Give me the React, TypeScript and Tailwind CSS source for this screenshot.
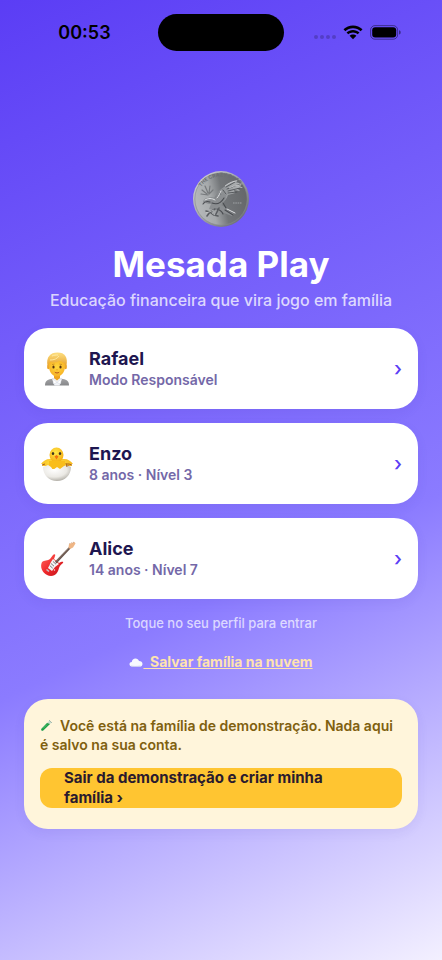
import React from "react";

function WifiIcon() {
  return (
    <svg width="20" height="15" viewBox="0 0 20 15" aria-hidden="true">
      <path d="M10 0.6C6.4 0.6 3 2 0.5 4.3L2.3 6.2C4.4 4.3 7.1 3.2 10 3.2s5.6 1.1 7.7 3L19.5 4.3C17 2 13.6 .6 10 .6Z" />
      <path d="M10 5C7.6 5 5.3 5.9 3.5 7.5L5.3 9.3C6.6 8.2 8.2 7.500 10 7.5s3.4 .7 4.7 1.800L16.5 7.5C14.7 5.9 12.4 5 10 5Z" />
      <path d="M10 9.4C8.7 9.4 7.5 9.9 6.6 10.7L10 14.2l3.4-3.5C12.5 9.9 11.3 9.4 10 9.4Z" />
    </svg>
  );
}

function BatteryIcon() {
  return (
    <svg width="32" height="15" viewBox="0 0 32 15" aria-hidden="true">
      <rect x="0.6" y="0.6" width="27" height="13.6" rx="4.3" fill="none" stroke="#000" strokeOpacity=".42" />
      <rect x="2.2" y="2.2" width="24" height="10.4" rx="3" />
      <path d="M29 5.2c1.2 .4 1.7 1.2 1.7 2.200s-.5 1.8-1.7 2.2Z" fillOpacity=".45" />
    </svg>
  );
}

function Coin() {
  return (
    <svg width="58" height="58" viewBox="0 0 58 58" role="img" aria-label="Moeda">
      <defs>
        <linearGradient id="rim" x1="0" y1="0" x2="1" y2="1">
          <stop offset="0" stopColor="#d5d8da" />
          <stop offset=".5" stopColor="#a2a5a8" />
          <stop offset="1" stopColor="#5b5e62" />
        </linearGradient>
        <linearGradient id="face" x1=".05" y1=".6" x2=".95" y2=".4">
          <stop offset="0" stopColor="#b4b7b9" />
          <stop offset=".3" stopColor="#a6a9ab" />
          <stop offset=".55" stopColor="#737679" />
          <stop offset="1" stopColor="#66686b" />
        </linearGradient>
        <linearGradient id="wing" x1="0" y1="0" x2="1" y2="0">
          <stop offset="0" stopColor="#7c7f82" />
          <stop offset="1" stopColor="#b7babc" />
        </linearGradient>
        <path id="legend" d="M9 17C17 5 37 2 48 15" />
      </defs>
      <circle cx="29" cy="29" r="28" fill="url(#rim)" />
      <circle cx="29" cy="29" r="26.2" fill="url(#face)" stroke="#85888b" strokeWidth=".6" />
      <text fontSize="5" fontWeight="700" fill="#6b6e71" fontFamily="Inter, sans-serif">
        <textPath href="#legend">THE CRAZY ONES</textPath>
      </text>
      <path
        d="M10 20l5 4M13 16l3 7M18 16l-1 7M21 20l-4 4M9 24l7 1"
        stroke="#76797c"
        strokeWidth="1.2"
        strokeLinecap="round"
      />
      <path
        d="M24 25c2-4 5-6 8-8 4-4 8-6 14-7l-3 2 8 2-5 1 5 3-6 0 3 3-6-1 1 3-7 2c-1 4-4 7-8 9l-8-3Z"
        fill="url(#wing)"
      />
      <path
        d="M34 17l9-5M35 19l13-5M36 21l12-3M36 23l9-1M31 20l3 4M28 23l3 4"
        stroke="#505357"
        strokeWidth=".9"
        strokeLinecap="round"
      />
      <path d="M33 16c4-3 8-5 12-5M37 18c4-2 8-3 12-3" fill="none" stroke="#dcdee0" strokeWidth=".7" />
      <path
        d="M11 33c0-3 2-5 5-5 3-2 6-1 9 1 3-2 4-5 6-7l3 3c0 4-2 8-5 10l4 2 3 4 6 3-2 2-8-3-5-4-5 1-5-1 2-5c-2 0-4 0-6-2Z"
        fill="#8b8e91"
      />
      <path
        d="M11 34c2-3 4-3 7-2M20 33c5 2 9 0 12-5M25 39c3 1 5 2 6 5M33 40l8 5M31 33l3 5"
        fill="none"
        stroke="#484b4f"
        strokeWidth="1.1"
        strokeLinecap="round"
      />
      <path
        d="M13 30c3-2 7-2 10 0M25 28c2-2 3-5 4-7M35 39l8 4"
        fill="none"
        stroke="#e1e3e5"
        strokeWidth="1"
        strokeLinecap="round"
      />
      <path
        d="M23 39l-5 3-4-1M18 42l-3 4M18 42l4 3 4 1M27 38l-3 6"
        fill="none"
        stroke="#5a5d61"
        strokeWidth="1.6"
        strokeLinecap="round"
        strokeLinejoin="round"
      />
      <path d="M22 40l-5 2-3 1M20 43l3 2" fill="none" stroke="#d0d2d4" strokeWidth=".7" />
      <path d="M41 33h9" stroke="#8e9194" strokeWidth="1.4" strokeDasharray="1.6 .7" />
    </svg>
  );
}

function PersonIcon() {
  return (
    <svg width="34" height="36" viewBox="0 0 34 36" aria-hidden="true">
      <defs>
        <radialGradient id="skin" cx=".5" cy=".4" r=".6">
          <stop offset="0" stopColor="#ffd83f" />
          <stop offset="1" stopColor="#f7b024" />
        </radialGradient>
        <linearGradient id="hair" x1="0" y1="0" x2="0" y2="1">
          <stop offset="0" stopColor="#fcdc7d" />
          <stop offset="1" stopColor="#e6a02c" />
        </linearGradient>
        <linearGradient id="jacket" x1="0" y1="0" x2="0" y2="1">
          <stop offset="0" stopColor="#a6a6a8" />
          <stop offset="1" stopColor="#86878a" />
        </linearGradient>
      </defs>
      <path d="M5 34.500c0-4 2-6 6-6.500l6-1 6 1c4 .5 6 2.500 6 6.500Z" fill="url(#jacket)" />
      <path d="M12 27.500h10l-2.500 7h-5Z" fill="#f1f3f8" />
      <path d="M14 22h6v5l-3 2.500-3-2.500Z" fill="#eea31e" />
      <path d="M12.500 27.500l4.500 4-3.500 1.500ZM21.500 27.500l-4.500 4 3.500 1.500Z" fill="#fff" stroke="#c5cad3" strokeWidth=".4" />
      <ellipse cx="8.400" cy="16" rx="1.300" ry="2.200" fill="#eda523" />
      <ellipse cx="25.600" cy="16" rx="1.300" ry="2.200" fill="#eda523" />
      <path d="M7.500 15C6 6 10 1.500 17.500 1.500S28 6 26.500 15l-1 2h-17Z" fill="url(#hair)" />
      <path d="M9 12c0-1 2-2 8-2s8 1 8 2c1 8-3 13.500-8 13.500S8 20 9 12Z" fill="url(#skin)" />
      <path d="M8.500 15c0-2 .5-3 1-4 4 1 8 .5 11-2 1 2 3 3 4.500 3.500v2.500l1-1c1-7-2-11-8.500-11.500C10 2 6.500 7 8 14Z" fill="url(#hair)" />
      <path d="M10 9c4 0 7-1 9-4M12 5c2-1 4-1 6-1" fill="none" stroke="#fff0b0" strokeWidth=".8" />
      <ellipse cx="13.500" cy="16" rx="1.100" ry="1.500" fill="#54310f" />
      <ellipse cx="20.500" cy="16" rx="1.100" ry="1.500" fill="#54310f" />
      <path d="M12 13.500l2.500-.4M19.500 13.100l2.500.4" stroke="#bd7d1b" strokeWidth=".7" />
      <path d="M16.300 18.800h1.400" stroke="#dc9218" strokeWidth=".8" />
      <path d="M14.800 21.200c1.300 1 3.100 1 4.400 0" fill="none" stroke="#b5531d" strokeWidth="1" />
    </svg>
  );
}

function ChickIcon() {
  return (
    <svg width="34" height="36" viewBox="0 0 34 36" aria-hidden="true">
      <defs>
        <radialGradient id="chick" cx=".45" cy=".35" r=".7">
          <stop offset="0" stopColor="#ffe94a" />
          <stop offset="1" stopColor="#f5a90f" />
        </radialGradient>
        <radialGradient id="shell" cx=".4" cy=".3" r=".75">
          <stop offset="0" stopColor="#fff" />
          <stop offset=".6" stopColor="#ebe9e4" />
          <stop offset="1" stopColor="#a9a69e" />
        </radialGradient>
      </defs>
      <path d="M10 13C6 13 3 15 1 18l2 0-1 2 4 0 3 3h16l3-3 4 0-1-2 2 0C31 15 28 13 24 13Z" fill="url(#chick)" />
      <ellipse cx="16.500" cy="9" rx="7" ry="7.500" fill="url(#chick)" />
      <path d="M9 15h16v8H9Z" fill="#f9bd1b" />
      <path d="M3 21l5-2 3 2 2 3 4-3 3 2 4-3 3-1 4 2c0 8-6 14-14 14S3 29 3 21Z" fill="url(#shell)" />
      <ellipse cx="13" cy="7.500" rx="1.200" ry="1.600" fill="#3d3520" />
      <ellipse cx="20" cy="7.500" rx="1.200" ry="1.600" fill="#3d3520" />
      <path d="M14.500 10.500l2-1.500 2 1.500-2 3Z" fill="#f0740f" />
      <path d="M2 19l3-1M32 19l-3-1M26 17l1 4M28 17l0 3" stroke="#a9641a" strokeWidth="1" />
    </svg>
  );
}

function GuitarIcon() {
  return (
    <svg width="36" height="36" viewBox="0 0 36 36" aria-hidden="true">
      <defs>
        <linearGradient id="guitar" x1="0" y1="0" x2="1" y2="1">
          <stop offset="0" stopColor="#ff6a60" />
          <stop offset=".5" stopColor="#f0282b" />
          <stop offset="1" stopColor="#bd1219" />
        </linearGradient>
      </defs>
      <path
        d="M2 21c2-2 6-1 8-3l3-4c1-1 3-1 2 1l-1 3 5 4c2-1 5-2 4 0-1 1-3 2-4 5-1 4-3 8-8 8C4 35-1 27 2 21Z"
        fill="url(#guitar)"
      />
      <path d="M13 18l6 5-4 3-3 4-4-3 3-6Z" fill="#f5f3f3" />
      <path d="M15 20.500L29 6l1.500 1.500-14 15Z" fill="#66534b" />
      <path d="M16 20.500L29.500 6.500" stroke="#bda898" strokeWidth=".4" />
      <path d="M28.500 6.500l.5-3.500 5.500-2 1 1.500-2.500 4-3 1.500Z" fill="#efb685" />
      <path d="M29.500 2.200l.8 .8M31.500 1.400l.8 .8M33.200 1l.8 .8" stroke="#b98a6b" strokeWidth=".7" />
      <path d="M11 22.500l3 2.700M9.700 24.500l3 2.700M13 20.500l3 2.700" stroke="#77787e" strokeWidth="1" />
      <path d="M6.500 28.500l2.500 2" stroke="#c5c5c9" strokeWidth="1.600" />
      <circle cx="14.500" cy="29" r=".7" fill="#eee" />
    </svg>
  );
}

function CloudIcon() {
  return (
    <svg className="inline-block align-[-1px]" width="14" height="11" viewBox="0 0 14 11" aria-hidden="true">
      <path
        d="M3 9.500C1.300 9.500.5 8.500.5 7.300c0-1.300 1-2.200 2.300-2.200C3 2.800 4.500 1.500 6.500 1.500c1.700 0 3 1 3.500 2.500 2 0 3.500 1 3.500 2.900 0 1.600-1.200 2.600-2.800 2.600Z"
        fill="#f7f9ff"
      />
      <path d="M2 9c3 .6 6 .5 9.500 0" fill="none" stroke="#cdd3e8" strokeWidth=".8" />
    </svg>
  );
}

function TubeIcon() {
  return (
    <svg className="inline-block align-[-1px]" width="13" height="13" viewBox="0 0 13 13" aria-hidden="true">
      <path d="M9.500 1.500l2 2-8.200 8c-1.500 1.200-3-.3-1.900-1.900Z" fill="#c6dccb" />
      <path d="M7 4l3 .9-6.800 6.500c-1.300 1-2.600-.4-1.700-1.700Z" fill="#1d9e45" />
      <path d="M9 1l3 3" stroke="#a9bbb0" strokeWidth="1" />
      <path d="M3 9.500l4-4" stroke="#67d283" strokeWidth=".7" />
    </svg>
  );
}

const profiles = [
  { name: "Rafael", detail: "Modo Responsável", icon: <PersonIcon /> },
  { name: "Enzo", detail: "8 anos · Nível 3", icon: <ChickIcon /> },
  { name: "Alice", detail: "14 anos · Nível 7", icon: <GuitarIcon /> },
];

export default function App() {
  return (
    <div className="flex min-h-screen flex-col bg-[linear-gradient(155deg,#5b3df5_0%,#8b7bff_60%,#f3f0ff_100%)] font-['Inter',sans-serif]">
      <header className="grid h-[65px] grid-cols-[1fr_126px_1fr] items-center">
        <time className="pl-[11px] text-center text-[18px] font-semibold text-black">00:53</time>
        <div className="h-[37px] rounded-full bg-black" />
        <div className="flex items-center justify-end gap-[7px] pr-10">
          <div className="flex gap-[2px] pt-2">
            <span className="size-1 rounded-full bg-black/20" />
            <span className="size-1 rounded-full bg-black/20" />
            <span className="size-1 rounded-full bg-black/20" />
            <span className="size-1 rounded-full bg-black/20" />
          </div>
          <WifiIcon />
          <BatteryIcon />
        </div>
      </header>

      <main className="flex flex-1 flex-col items-center px-6 pt-[105px] pb-10">
        <Coin />
        <h1 className="mt-4 text-[35px] leading-10 font-bold text-white">Mesada Play</h1>
        <p className="mt-[6px] text-[16px] leading-5 font-medium text-white/75">
          Educação financeira que vira jogo em família
        </p>

        <div className="mt-[18px] flex w-full flex-col gap-[14px]">
          {profiles.map((profile) => (
            <button
              key={profile.name}
              type="button"
              className="flex h-[81px] w-full items-center rounded-3xl bg-white px-4 pt-px text-left shadow-[0_4px_12px_rgba(60,40,160,0.07)]"
            >
              <span className="flex w-[49px] shrink-0">{profile.icon}</span>
              <span className="flex flex-1 flex-col">
                <span className="text-[18px] leading-[22px] font-bold text-[#1e1650]">{profile.name}</span>
                <span className="text-[14px] leading-5 font-semibold text-[#7468a8]">{profile.detail}</span>
              </span>
              <span className="text-[20px] leading-6 font-medium text-[#5b3df5]">›</span>
            </button>
          ))}
        </div>

        <p className="mt-[15px] text-[13px] leading-[18px] font-medium text-white/70">Toque no seu perfil para entrar</p>
        <a href="#nuvem" className="mt-5 text-[14px] leading-5 font-bold text-[#ffe3ae] underline">
          <CloudIcon />
          {"\u00a0 Salvar família na nuvem"}
        </a>

        <section className="mt-[27px] w-full rounded-3xl bg-[#fff5db] px-4 pt-[17px] pb-5 shadow-[0_4px_12px_rgba(60,40,160,0.07)]">
          <p className="text-[14px] leading-[19px] font-semibold text-[#80600f]">
            <TubeIcon />
            {"\u00a0 Você está na família de demonstração. Nada aqui é salvo na sua conta."}
          </p>
          <button
            type="button"
            className="mt-[14px] w-full rounded-xl bg-[#ffc531] pr-8 pl-6 text-left text-[15px] leading-5 font-bold text-[#2a1a2e]"
          >
            Sair da demonstração e criar minha família ›
          </button>
        </section>
      </main>
    </div>
  );
}
